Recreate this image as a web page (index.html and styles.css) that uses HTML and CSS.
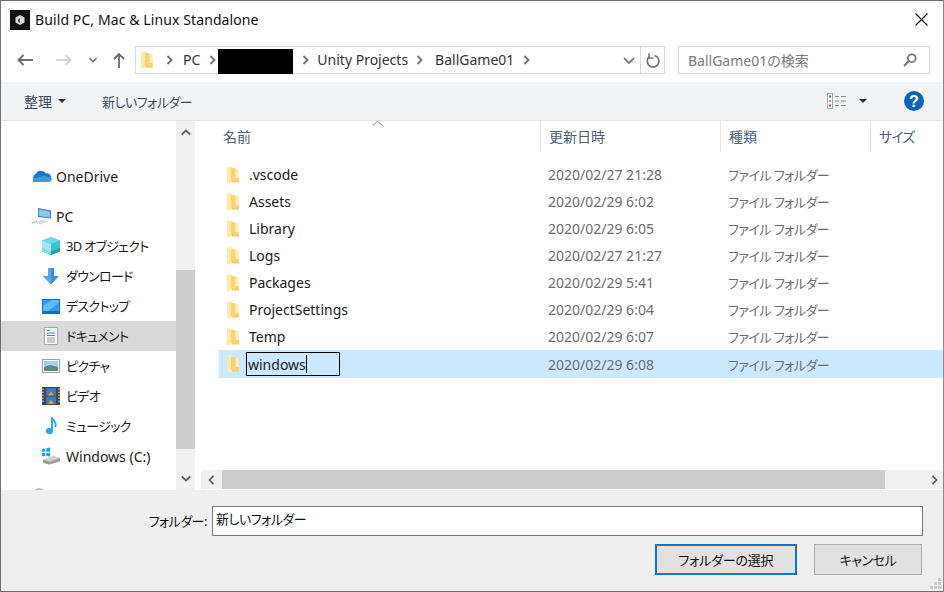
FILE: index.html
```html
<!DOCTYPE html>
<html lang="ja">
<head>
<meta charset="utf-8">
<title>Build PC, Mac &amp; Linux Standalone</title>
<link rel="stylesheet" href="styles.css">
</head>
<body>
<svg class="defs" width="0" height="0" aria-hidden="true">
  <symbol id="folder" viewBox="0 0 12 18">
    <path d="M7 3H12V15H7z" fill="#fceebc"/>
    <path d="M4 2H8.500V12H12V16H4z" fill="#f6d574"/>
    <path d="M0 0.500H5.500L4.500 2V14L5.500 16.500H3.500L0.500 18L0 17z" fill="#fce9a6"/>
    <path d="M4.500 2V14L5.500 16.500H12V15.500H6L5.200 13.500V2z" fill="#eec55c"/>
  </symbol>
  <symbol id="chev" viewBox="0 0 8 10"><path d="M1.500 1L5.500 5L1.500 9" fill="none" stroke="#6f6f6f" stroke-width="1.800"/></symbol>
</svg>
<div class="window">
  <header class="titlebar">
    <svg class="appicon" width="20" height="20" viewBox="0 0 20 20"><rect width="20" height="20" fill="#111"/><path d="M10 5l4.500 2.500v5L10 15l-4.500-2.500v-5z" fill="#d8d8d8"/><path d="M10 8l-2 1.500v2L10 13z" fill="#555"/></svg>
    <span class="title">Build PC, Mac &amp; Linux Standalone</span>
    <svg class="close" width="13" height="13" viewBox="0 0 13 13"><path d="M0.500 0.500L12.500 12.500M12.500 0.500L0.500 12.500" stroke="#111" stroke-width="1.100"/></svg>
  </header>

  <nav class="navbar">
    <svg class="nav-back" width="16" height="12" viewBox="0 0 16 12"><path d="M6.500 1L1.500 6L6.500 11M1.500 6H16" fill="none" stroke="#6d6d6d" stroke-width="1.800"/></svg>
    <svg class="nav-forward" width="16" height="12" viewBox="0 0 16 12"><path d="M9.500 1L14.500 6L9.500 11M14.500 6H0" fill="none" stroke="#d4d4d4" stroke-width="1.800"/></svg>
    <svg class="nav-recent" width="8" height="6" viewBox="0 0 8 6"><path d="M0.500 1L4 4.500L7.500 1" fill="none" stroke="#6d6d6d" stroke-width="1.600"/></svg>
    <svg class="nav-up" width="12" height="15" viewBox="0 0 12 15"><path d="M1 6L6 1L11 6M6 1V15" fill="none" stroke="#6d6d6d" stroke-width="1.800"/></svg>
    <div class="address">
      <svg class="addr-folder" width="12" height="18"><use href="#folder"/></svg>
      <svg class="crumb-chev c1" width="8" height="10"><use href="#chev"/></svg>
      <span class="crumb c-pc">PC</span>
      <svg class="crumb-chev c2" width="8" height="10"><use href="#chev"/></svg>
      <span class="redact"></span>
      <svg class="crumb-chev c3" width="8" height="10"><use href="#chev"/></svg>
      <span class="crumb c-unity">Unity Projects</span>
      <svg class="crumb-chev c4" width="8" height="10"><use href="#chev"/></svg>
      <span class="crumb c-ball">BallGame01</span>
      <svg class="crumb-chev c5" width="8" height="10"><use href="#chev"/></svg>
      <svg class="addr-drop" width="12" height="7" viewBox="0 0 12 7"><path d="M1 1L6 6L11 1" fill="none" stroke="#6d6d6d" stroke-width="1.700"/></svg>
      <span class="addr-refresh">
        <svg width="14" height="15" viewBox="0 0 14 15"><path d="M8.500 2.500A5.800 5.800 0 1 1 3.500 3.500" fill="none" stroke="#747474" stroke-width="1.700"/><path d="M3 0.500V5H7.500" fill="none" stroke="#747474" stroke-width="1.500"/></svg>
      </span>
    </div>
    <div class="search">
      <span class="search-text">BallGame01の検索</span>
      <svg width="14" height="14" viewBox="0 0 14 14"><circle cx="8.800" cy="5.200" r="3.900" fill="none" stroke="#777" stroke-width="1.800"/><path d="M6 8L1 13" stroke="#777" stroke-width="2.200"/></svg>
    </div>
  </nav>

  <div class="toolbar">
    <span class="tool-organize">整理</span>
    <span class="caret caret-organize"></span>
    <span class="tool-new kana">新しいフォルダー</span>
    <svg class="view-icon" width="20" height="16" viewBox="0 0 20 16">
      <rect x="0.500" y="0.500" width="5" height="15" fill="#fff" stroke="#a8a8a8"/>
      <rect x="2" y="2.500" width="2" height="2" fill="#3c7f8a"/><rect x="2" y="7" width="2" height="2" fill="#b9a52f"/><rect x="2" y="11.500" width="2" height="2" fill="#b5482c"/>
      <path d="M8 3.500h4M14 3.500h5M8 8h4M14 8h5M8 12.500h4M14 12.500h5" stroke="#8a8a8a"/>
    </svg>
    <span class="caret caret-view"></span>
    <svg class="help" width="20" height="20" viewBox="0 0 20 20"><circle cx="10" cy="10" r="10" fill="#0a64b8"/><text x="10" y="15.500" text-anchor="middle" class="help-q">?</text></svg>
  </div>

  <main class="content">
    <aside class="sidebar">
      <div class="tree">
        <div class="tree-item top first">
          <svg width="21" height="14" viewBox="0 0 21 14"><path d="M5 12.500A4 4 0 0 1 4.500 5A6 6 0 0 1 15 4.500A4 4 0 0 1 17 12.500z" fill="#1c78c8"/><path d="M2 13H18A3 3 0 0 0 20.500 9L13 7L4 9A3 3 0 0 0 2 13" fill="#3b9be0"/></svg>
          <span>OneDrive</span>
        </div>
        <div class="tree-item top pc">
          <svg width="21" height="18" viewBox="0 0 21 18"><path d="M7 1L20 3.500V11.500L7 10z" fill="#3f86b4"/><path d="M8 2.500L19 4.500V10.500L8 9z" fill="#8cc6ea"/><path d="M4 15.500L11 12.500L17 14.500L10 17.500z" fill="#dcdcdc"/><path d="M0 16L6 13V14.500L1.500 17z" fill="#c8c8c8"/></svg>
          <span>PC</span>
        </div>
        <div class="tree-item">
          <svg width="18" height="18" viewBox="0 0 18 18"><path d="M9 0L18 3.500V14.500L9 18L0 14.500V3.500z" fill="#35c3d6"/><path d="M0 3.500L9 7V18L0 14.500z" fill="#a5e8ee"/><path d="M9 0L18 3.500L9 7L0 3.500z" fill="#6adbe6"/><path d="M0 11L9 14.500V18L0 14.500z" fill="#7fd8e2"/><path d="M9 14.500L18 11V14.500L9 18z" fill="#1fa0b6"/></svg>
          <span class="kana side">3D オブジェクト</span>
        </div>
        <div class="tree-item">
          <svg width="18" height="17" viewBox="0 0 18 17"><path d="M6 0H12V8H17L9 16.500L1 8H6z" fill="#3e8fdc"/><path d="M6 0H9V16.500L1 8H6z" fill="#5aa7ea"/></svg>
          <span class="kana side">ダウンロード</span>
        </div>
        <div class="tree-item">
          <svg width="18" height="15" viewBox="0 0 18 15"><rect width="18" height="15" fill="#1c6fb5"/><rect x="1" y="1" width="16" height="11" fill="#2e9df0"/><path d="M1 12V7L10 1H17V4L6 12z" fill="#60bcf7"/></svg>
          <span class="kana side">デスクトップ</span>
        </div>
        <div class="tree-item active">
          <svg width="14" height="18" viewBox="0 0 14 18"><path d="M0.500 0.500H13.500V17.500H0.500z" fill="#fff" stroke="#a5a5a5"/><path d="M3 3.500H6M3 6H11M3 8.500H11" stroke="#2e8ed8" stroke-width="1.200"/><path d="M3 11H11M3 13H11M3 15H11" stroke="#9a9a9a"/></svg>
          <span class="kana side">ドキュメント</span>
        </div>
        <div class="tree-item">
          <svg width="18" height="14" viewBox="0 0 18 14"><rect x="0.500" y="0.500" width="17" height="13" fill="#fff" stroke="#a2a2a2"/><rect x="2" y="2" width="14" height="10" fill="#a8d2e8"/><path d="M2 8L8 6L16 8V12H2z" fill="#5c8a80"/></svg>
          <span class="kana side">ピクチャ</span>
        </div>
        <div class="tree-item">
          <svg width="18" height="18" viewBox="0 0 18 18"><rect width="18" height="18" fill="#444"/><path d="M1 1.500V16.500M17 1.500V16.500" stroke="#bbb" stroke-width="1.500" stroke-dasharray="1.500 1.500"/><rect x="4" y="1" width="10" height="7.500" fill="#3a78c0"/><rect x="4" y="9.500" width="10" height="7.500" fill="#3a78c0"/><path d="M6 8.500L9 4L12 8.500zM6 17L9 12.500L12 17z" fill="#e0a030"/></svg>
          <span class="kana side">ビデオ</span>
        </div>
        <div class="tree-item">
          <svg width="18" height="18" viewBox="0 0 18 18"><path d="M10 0.500V13" stroke="#2fa4e8" stroke-width="2"/><path d="M10 0.500C11 4 15 5 13.500 10" fill="none" stroke="#2fa4e8" stroke-width="1.800"/><ellipse cx="7.500" cy="14" rx="3.500" ry="3.300" fill="#2fa4e8"/></svg>
          <span class="kana side">ミュージック</span>
        </div>
        <div class="tree-item">
          <svg width="19" height="18" viewBox="0 0 19 18"><path d="M0 1.500L3.500 1V4.500H0zM4.500 0.800L8.500 0V4.500H4.500zM0 5.500H3.500V9H0zM4.500 5.500H8.500V9.500L4.500 9z" fill="#18a8ec"/><path d="M1 13L12 8.500L19 11V14.500L8 18L1 16z" fill="#cfcfcf"/><path d="M1 13L8 15L19 11V14.500L8 18L1 16z" fill="#9c9c9c"/><path d="M4 15.500L7 16.300" stroke="#4caf50" stroke-width="1.200"/></svg>
          <span>Windows (C:)</span>
        </div>
        <div class="tree-item top last">
          <svg width="20" height="18" viewBox="0 0 20 18"><circle cx="8" cy="8" r="7" fill="#a8cbe0"/></svg>
        </div>
      </div>
      <div class="vscroll">
        <svg class="vs-arrow" width="10" height="7" viewBox="0 0 10 7"><path d="M0.800 5.500L5 1.500L9.200 5.500" fill="none" stroke="#606060" stroke-width="1.800"/></svg>
        <div class="vs-thumb"></div>
        <svg class="vs-arrow down" width="10" height="7" viewBox="0 0 10 7"><path d="M0.800 1.500L5 5.500L9.200 1.500" fill="none" stroke="#606060" stroke-width="1.800"/></svg>
      </div>
    </aside>

    <section class="files">
      <div class="list-head">
        <svg class="sort" width="11" height="5" viewBox="0 0 11 5"><path d="M0.500 4.500L5.500 0.500L10.500 4.500" fill="none" stroke="#8a8a8a"/></svg>
        <span class="col col-name">名前</span>
        <span class="col col-date">更新日時</span>
        <span class="col col-type">種類</span>
        <span class="col col-size">サイズ</span>
      </div>
      <div class="rows">
        <div class="row"><svg class="folder" width="12" height="18"><use href="#folder"/></svg><span class="name">.vscode</span><span class="date">2020/02/27 21:28</span><span class="type kana">ファイル フォルダー</span></div>
        <div class="row"><svg class="folder" width="12" height="18"><use href="#folder"/></svg><span class="name">Assets</span><span class="date">2020/02/29 6:02</span><span class="type kana">ファイル フォルダー</span></div>
        <div class="row"><svg class="folder" width="12" height="18"><use href="#folder"/></svg><span class="name">Library</span><span class="date">2020/02/29 6:05</span><span class="type kana">ファイル フォルダー</span></div>
        <div class="row"><svg class="folder" width="12" height="18"><use href="#folder"/></svg><span class="name">Logs</span><span class="date">2020/02/27 21:27</span><span class="type kana">ファイル フォルダー</span></div>
        <div class="row"><svg class="folder" width="12" height="18"><use href="#folder"/></svg><span class="name">Packages</span><span class="date">2020/02/29 5:41</span><span class="type kana">ファイル フォルダー</span></div>
        <div class="row"><svg class="folder" width="12" height="18"><use href="#folder"/></svg><span class="name">ProjectSettings</span><span class="date">2020/02/29 6:04</span><span class="type kana">ファイル フォルダー</span></div>
        <div class="row"><svg class="folder" width="12" height="18"><use href="#folder"/></svg><span class="name">Temp</span><span class="date">2020/02/29 6:07</span><span class="type kana">ファイル フォルダー</span></div>
        <div class="row selected"><svg class="folder" width="12" height="18"><use href="#folder"/></svg><span class="name rename"><span class="rename-text">windows</span></span><span class="date">2020/02/29 6:08</span><span class="type kana">ファイル フォルダー</span></div>
      </div>
      <div class="hscroll">
        <svg class="hs-arrow" width="7" height="10" viewBox="0 0 7 10"><path d="M5.500 0.800L1.500 5L5.500 9.200" fill="none" stroke="#606060" stroke-width="1.800"/></svg>
        <div class="hs-thumb"></div>
        <svg class="hs-arrow right" width="7" height="10" viewBox="0 0 7 10"><path d="M1.500 0.800L5.500 5L1.500 9.200" fill="none" stroke="#606060" stroke-width="1.800"/></svg>
      </div>
    </section>
  </main>

  <footer class="footer">
    <div class="field">
      <label class="field-label kana">フォルダー:</label>
      <div class="field-input kana">新しいフォルダー</div>
    </div>
    <div class="actions">
      <button class="btn primary">フォルダーの選択</button>
      <button class="btn cancel">キャンセル</button>
    </div>
    <svg class="grip" width="12" height="12" viewBox="0 0 12 12"><path d="M8 0h3v3H8zM4 4h3v3H4zM8 4h3v3H8zM0 8h3v3H0zM4 8h3v3H4zM8 8h3v3H8z" fill="#c8c8c8"/></svg>
  </footer>
</div>
</body>
</html>
```
FILE: styles.css
```css
* { box-sizing: border-box; }
html, body { margin: 0; padding: 0; background: #fff; }
.defs { position: absolute; }
body, button {
  font-family: "Noto Sans", "Noto Sans CJK JP", sans-serif;
  font-size: 14px;
  font-feature-settings: "palt";
  color: #111;
}
.kana { font-size: 13px; letter-spacing: -0.5px; }
.kana.side { letter-spacing: -0.7px; margin-bottom: 2px; }
.window {
  width: 944px;
  height: 592px;
  display: flex;
  flex-direction: column;
  overflow: hidden;
  border: 1px solid #6e6e6e;
  border-right-color: #8a8a8a;
  background: #fff;
}
svg { display: block; flex: none; }

/* title bar */
.titlebar { height: 37px; flex: none; display: flex; align-items: center; padding: 0 15px 0 9px; }
.title { margin-left: 5px; font-size: 14px; line-height: 20px; letter-spacing: 0.1px; }
.close { margin-left: auto; }

/* navigation */
.navbar { height: 44px; flex: none; display: flex; align-items: center; }
.nav-back { margin-left: 16px; }
.nav-forward { margin-left: 23px; }
.nav-recent { margin-left: 17px; }
.nav-up { margin-left: 16px; }
.address {
  margin-left: 10px;
  width: 530px;
  height: 28px;
  border: 1px solid #d9d9d9;
  display: flex;
  align-items: center;
  color: #333;
}
.addr-folder { margin-left: 5px; }
.c1 { margin-left: 13px; }
.crumb { line-height: 20px; white-space: nowrap; }
.c-pc { margin-left: 9px; }
.c2 { margin-left: 9px; }
.redact { width: 75px; height: 25px; background: #000; margin-left: 1px; margin-top: 2px; }
.c3 { margin-left: 9px; }
.c-unity { margin-left: 7px; }
.c4 { margin-left: 8px; }
.c-ball { margin-left: 11px; }
.c5 { margin-left: 9px; }
.addr-drop { margin-left: auto; margin-right: 5px; }
.addr-refresh {
  width: 24px;
  height: 100%;
  border-left: 1px solid #d9d9d9;
  display: flex;
  align-items: center;
  justify-content: center;
}
.search {
  margin-left: 13px;
  width: 252px;
  height: 28px;
  border: 1px solid #d9d9d9;
  display: flex;
  align-items: center;
  justify-content: space-between;
  padding: 0 12px 0 9px;
  color: #7b7b7b;
}
.search-text { white-space: nowrap; }

/* toolbar */
.toolbar {
  height: 39px;
  flex: none;
  background: #f3f4f6;
  border-bottom: 1px solid #e3e3e3;
  display: flex;
  align-items: center;
  color: #3f4a5c;
}
.tool-organize { margin-left: 23px; }
.caret { width: 0; height: 0; border-left: 4px solid transparent; border-right: 4px solid transparent; border-top: 4px solid #1e3050; }
.caret-organize { margin-left: 6px; }
.tool-new { margin-left: 36px; }
.view-icon { margin-left: auto; }
.caret-view { margin-left: 12px; }
.help { margin-left: 37px; margin-right: 19px; }
.help-q { font-family: "Liberation Sans", sans-serif; font-weight: 700; font-size: 16px; fill: #fff; }

/* main */
.content { flex: 1; min-height: 0; display: flex; }
.sidebar { width: 194px; flex: none; display: flex; }
.tree { width: 175px; flex: none; overflow: hidden; height: 369px; padding-top: 40px; }
.tree-item { height: 30px; display: flex; align-items: center; padding-left: 41px; gap: 6px; white-space: nowrap; color: #1a1a1a; }
.tree-item svg { width: 18px; }
.tree-item.top { padding-left: 30px; gap: 4px; }
.tree-item.top svg { width: 21px; }
.tree-item.pc { margin-top: 10px; }
.tree-item.last { margin-top: 10px; }
.tree-item.active { background: #d9d9d9; }
.vscroll { width: 19px; flex: none; background: #f0f0f0; display: flex; flex-direction: column; align-items: center; padding-top: 8px; }
.vs-thumb { width: 100%; height: 179px; margin-top: 134px; background: #cdcdcd; }
.vs-arrow.down { margin-top: 26px; }

/* file list */
.files { flex: 1; min-width: 0; display: flex; flex-direction: column; margin-left: 6px; }
.list-head { height: 31px; flex: none; position: relative; display: flex; color: #4c607a; margin-left: 1px; }
.sort { position: absolute; left: 170px; top: 0; }
.col { display: block; line-height: 32px; height: 31px; border-right: 1px solid #e5e5e5; padding-left: 21px; }
.col-name { width: 339px; }
.col-date { width: 180px; padding-left: 8px; }
.col-type { width: 150px; padding-left: 8px; }
.col-size { flex: 1; border-right: 0; padding-left: 8px; letter-spacing: -1px; }
.rows { flex: 1; min-height: 0; padding-top: 9px; padding-left: 18px; }
.row { height: 27px; display: flex; align-items: center; white-space: nowrap; }
.folder { margin-left: 8px; }
.name { width: 299px; margin-left: 10px; color: #1a1a1a; }
.date { width: 180px; color: #6d6d6d; }
.type { color: #6d6d6d; }
.row.selected { background: #cce8ff; height: 28px; }
.rename { display: block; }
.rename-text { display: flex; align-items: center; width: 94px; height: 24px; margin-left: -3px; border: 1.500px solid #000; padding-left: 1px; }
.rename-text::after { content: ""; width: 1px; height: 18px; background: #000; }
.hscroll { height: 19px; flex: none; margin-bottom: 1px; background: #f0f0f0; display: flex; align-items: center; }
.hs-arrow { margin-left: 7px; }
.hs-thumb { width: 663px; height: 100%; margin-left: 7px; background: #cdcdcd; }
.hs-arrow.right { margin-left: 46px; }

/* footer */
.footer { height: 101px; flex: none; background: #efefef; display: flex; flex-direction: column; position: relative; padding-top: 16px; }
.field { display: flex; align-items: center; }
.field-label { width: 211px; padding-right: 5px; margin-bottom: 2px; text-align: right; white-space: nowrap; }
.field-input { width: 711px; height: 30px; background: #fff; border: 1px solid #7a7a7a; padding-left: 3px; line-height: 25px; }
.actions { display: flex; margin-top: 8px; padding-left: 654px; gap: 17px; }
.btn { height: 31px; background: #e1e1e1; padding: 0; color: #111; font-size: 13px; letter-spacing: -0.2px; }
.primary { width: 142px; border: 2px solid #0078d7; }
.cancel { width: 108px; border: 1px solid #adadad; letter-spacing: -0.5px; }
.grip { position: absolute; right: 1px; bottom: 1px; }
```
